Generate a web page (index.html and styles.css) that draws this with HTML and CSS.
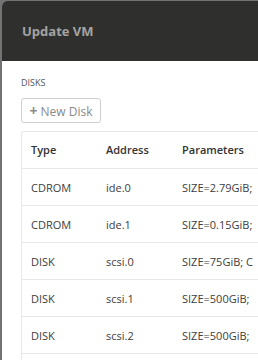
FILE: index.html
```html
<!DOCTYPE html>
<html lang="en">
<head>
    <meta charset="UTF-8">
    <meta name="viewport" content="width=device-width, initial-scale=1.0">
    <title>Update VM</title>
    <link rel="stylesheet" href="styles.css">
</head>
<body>
    <div class="modal">
        <div class="modal-header">
            <h1>Update VM</h1>
        </div>
        <div class="modal-body">
            <div class="section-label">Disks</div>
            <button class="btn-new"><span class="plus">+</span> New Disk</button>

            <div class="table-box">
                <table>
                    <colgroup>
                        <col class="col-type">
                        <col class="col-addr">
                        <col class="col-params">
                    </colgroup>
                    <thead>
                        <tr>
                            <th>Type</th>
                            <th>Address</th>
                            <th>Parameters</th>
                        </tr>
                    </thead>
                    <tbody>
                        <tr><td>CDROM</td><td>ide.0</td><td>SIZE=2.79GiB;</td></tr>
                        <tr><td>CDROM</td><td>ide.1</td><td>SIZE=0.15GiB;</td></tr>
                        <tr><td>DISK</td><td>scsi.0</td><td>SIZE=75GiB; C</td></tr>
                        <tr><td>DISK</td><td>scsi.1</td><td>SIZE=500GiB;</td></tr>
                        <tr><td>DISK</td><td>scsi.2</td><td>SIZE=500GiB;</td></tr>
                        <tr class="row-clipped"><td></td><td></td><td></td></tr>
                    </tbody>
                </table>
            </div>
        </div>
    </div>
</body>
</html>
```

FILE: styles.css
```css
:root {
    --header-bg: #2f302d;
    --header-text: #a3a3a3;
    --backdrop: #737373;
    --border: #e8e8e8;
    --text: #3d3d3d;
    --muted: #8a8a8a;
}

html, body {
    margin: 0;
    padding: 0;
    overflow: hidden;
}

body {
    font-family: 'Open Sans', Lato, sans-serif;
    background-color: var(--backdrop);
    padding: 1px 0 0 2px;
    height: 360px;
    box-sizing: border-box;
}

.modal {
    width: 256px;
    height: 359px;
    background: #ffffff;
    border-radius: 5px 0 0 0;
    overflow: hidden;
}

.modal-header {
    background-color: var(--header-bg);
    height: 60px;
    padding: 0 20px;
    display: flex;
    align-items: center;
}

h1 {
    margin: 0;
    font-size: 13px;
    font-weight: 700;
    color: var(--header-text);
}

.modal-body {
    padding: 15px 0 0 19px;
}

.section-label {
    font-size: 9px;
    text-transform: uppercase;
    color: #555;
    margin-bottom: 9px;
}

.btn-new {
    font-family: inherit;
    font-size: 12px;
    color: var(--muted);
    background: #fff;
    border: 1px solid #cfcfcf;
    border-radius: 3px;
    height: 25px;
    width: 80px;
    padding: 0;
    text-align: center;
}

.plus {
    font-weight: 700;
    font-size: 14px;
    color: #8c8c8c;
}

.table-box {
    margin-top: 8px;
    width: 290px;
    border: 1px solid var(--border);
    border-right: none;
    border-radius: 3px 0 0 0;
}

table {
    border-collapse: collapse;
    table-layout: fixed;
    width: 100%;
    font-size: 11px;
    color: var(--text);
}

.col-type {
    width: 75px;
}

.col-addr {
    width: 76px;
}

th, td {
    text-align: left;
    padding: 0 9px;
    white-space: nowrap;
    overflow: hidden;
}

th {
    height: 34px;
    padding-bottom: 2px;
    font-weight: 600;
    color: #333;
}

td {
    height: 36px;
    border-top: 1px solid var(--border);
}
```
